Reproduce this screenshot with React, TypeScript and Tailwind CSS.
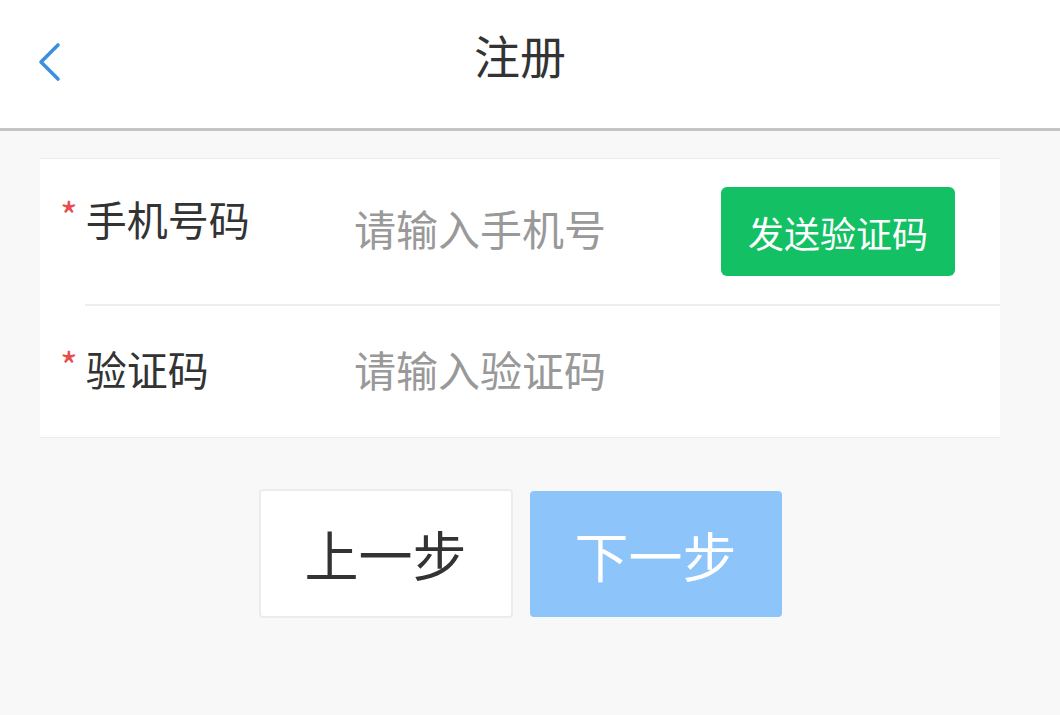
import { useState } from 'react';

const font = { fontFamily: '"Noto Sans CJK SC", "Noto Sans", sans-serif' };

export default function App() {
  const [phone, setPhone] = useState('');
  const [code, setCode] = useState('');

  return (
    <div className="min-h-[715px] w-full bg-[#f8f8f8] text-[#333]" style={font}>
      {/* header */}
      <div className="grid h-[131px] grid-cols-[1fr_auto_1fr] items-center border-b-[3px] border-[#c4c4c4] bg-white">
        <button className="mb-[4px] ml-[35px] flex h-[44px] w-[28px] items-center justify-center">
          <svg width="24" height="40" viewBox="0 0 24 40" fill="none">
            <path d="M21 3 L4 20 L21 37" stroke="#3b8fe0" strokeWidth="3.6" strokeLinecap="round" strokeLinejoin="round" />
          </svg>
        </button>
        <h1 className="mb-[20px] mr-[20px] text-[46px] leading-none font-normal text-[#333]">注册</h1>
        <div />
      </div>

      <div className="pl-[40px] pr-[60px] pt-[27px]">
        {/* form card */}
        <div className="border-y border-[#ececec] bg-white">
          <div className="ml-[45px] flex h-[147px] items-center border-b-2 border-[#eeeeee] pr-[45px]">
            <div className="-ml-[25px] mb-[27px] flex w-[294px] items-start">
              <span className="mr-[8px] mt-[-2px] text-[38px] leading-none text-[#e84c4c]">*</span>
              <span className="text-[41px] leading-none">手机号码</span>
            </div>
            <input
              value={phone}
              onChange={(e) => setPhone(e.target.value)}
              placeholder="请输入手机号"
              className="mb-[9px] min-w-0 flex-1 bg-transparent text-[42px] leading-none outline-none placeholder:text-[#999]"
            />
            <button className="h-[89px] w-[234px] rounded-[6px] bg-[#13c064] text-[36px] text-white">
              发送验证码
            </button>
          </div>
          <div className="ml-[45px] flex h-[131px] items-center pr-[45px]">
            <div className="-ml-[25px] mb-[7px] flex w-[294px] items-start">
              <span className="mr-[8px] mt-[-2px] text-[38px] leading-none text-[#e84c4c]">*</span>
              <span className="text-[41px] leading-none">验证码</span>
            </div>
            <input
              value={code}
              onChange={(e) => setCode(e.target.value)}
              placeholder="请输入验证码"
              className="mb-[7px] min-w-0 flex-1 bg-transparent text-[42px] leading-none outline-none placeholder:text-[#999]"
            />
          </div>
        </div>

        {/* actions */}
        <div className="mt-[51px] flex justify-center gap-[17px]">
          <button className="h-[129px] w-[254px] rounded-[4px] border-2 border-[#ececec] bg-white text-[54px] text-[#333]">
            上一步
          </button>
          <button className="mt-[2px] h-[126px] w-[252px] rounded-[4px] bg-[#8dc4fa] text-[54px] text-white">
            下一步
          </button>
        </div>
      </div>
    </div>
  );
}
